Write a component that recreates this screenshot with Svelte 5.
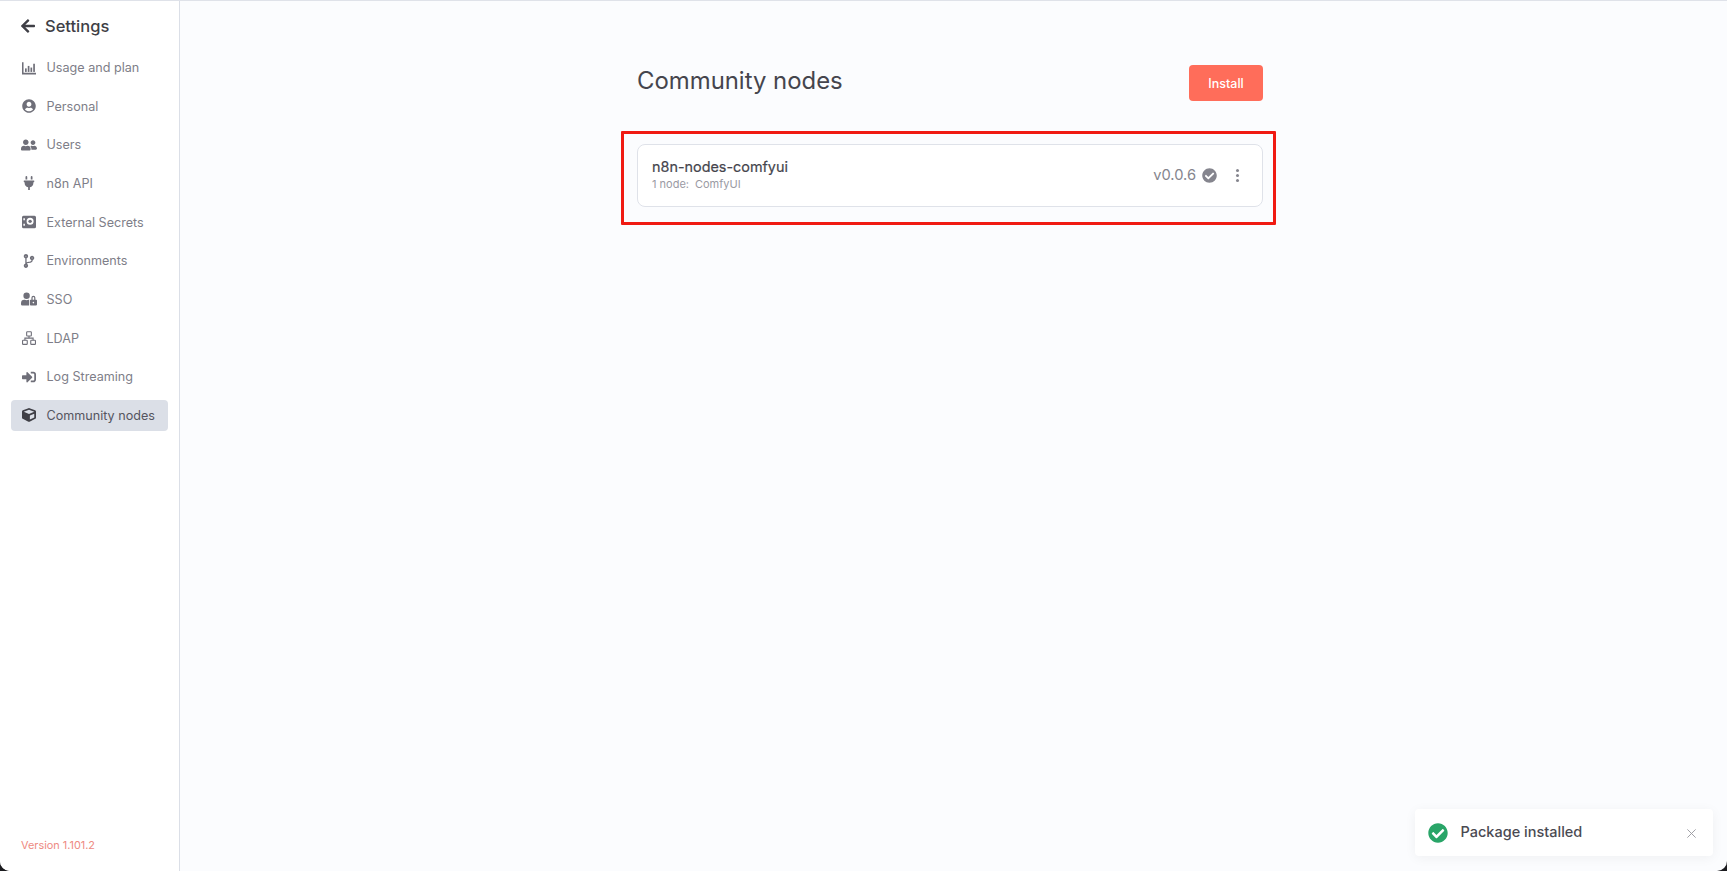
<script>
  const items = [
    { label: 'Usage and plan', vb: '0 0 512 512', custom: 'chart' },
    { label: 'Personal', vb: '0 0 496 512', d: 'M248 8C111 8 0 119 0 256s111 248 248 248 248-111 248-248S385 8 248 8zm0 96c48.6 0 88 39.4 88 88s-39.4 88-88 88-88-39.4-88-88 39.4-88 88-88zm0 344c-58.7 0-111.3-26.6-146.5-68.2 18.8-35.4 55.6-59.8 98.5-59.8 2.4 0 4.8.4 7.1 1.1 13 4.2 26.6 6.9 40.9 6.9 14.3 0 28-2.7 40.9-6.9 2.3-.7 4.7-1.1 7.1-1.1 42.9 0 79.7 24.4 98.5 59.8C359.3 421.4 306.7 448 248 448z' },
    { label: 'Users', vb: '0 0 640 512', d: 'M192 256c61.9 0 112-50.1 112-112S253.9 32 192 32 80 82.1 80 144s50.1 112 112 112zm76.8 32h-8.3c-20.8 10-43.9 16-68.5 16s-47.6-6-68.5-16h-8.3C51.6 288 0 339.6 0 403.2V432c0 26.5 21.5 48 48 48h288c26.5 0 48-21.5 48-48v-28.8c0-63.6-51.6-115.2-115.2-115.2zM480 256c53 0 96-43 96-96s-43-96-96-96-96 43-96 96 43 96 96 96zm48 32h-3.8c-13.9 4.8-28.6 8-44.2 8s-30.3-3.2-44.2-8H432c-20.4 0-39.2 5.9-55.7 15.4 24.4 26.3 39.7 61.2 39.7 99.8v38.4c0 2.2-.5 4.3-.6 6.4H592c26.5 0 48-21.5 48-48 0-61.9-50.1-112-112-112z' },
    { label: 'n8n API', vb: '0 0 384 512', d: 'M320,32a32,32,0,0,0-64,0v96h64Zm48,128H16A16,16,0,0,0,0,176v32a16,16,0,0,0,16,16H32v32A160.07,160.07,0,0,0,160,412.8V512h64V412.8A160.07,160.07,0,0,0,352,256V224h16a16,16,0,0,0,16-16V176A16,16,0,0,0,368,160ZM128,32a32,32,0,0,0-64,0v96h64Z' },
    { label: 'External Secrets', vb: '0 0 512 512', custom: 'vault' },
    { label: 'Environments', vb: '0 0 384 512', d: 'M384 144c0-44.2-35.8-80-80-80s-80 35.8-80 80c0 36.4 24.3 67.1 57.5 76.8-.6 16.1-4.2 28.5-11 36.9-15.4 19.2-49.3 22.4-85.2 25.7-28.2 2.6-57.4 5.4-81.3 16.9v-144c32.5-10.2 56-40.5 56-76.3 0-44.2-35.8-80-80-80S0 35.8 0 80c0 35.8 23.5 66.1 56 76.3v199.3C23.5 365.9 0 396.2 0 432c0 44.2 35.8 80 80 80s80-35.8 80-80c0-34-21.2-63.1-51.2-74.6 3.1-5.2 7.8-9.8 14.9-13.4 16.2-8.2 40.4-10.4 66.1-12.8 42.2-3.9 90-8.4 118.2-43.4 14-17.4 21.1-39.8 21.6-67.9 31.6-10.8 54.4-40.7 54.4-75.9zM80 64c8.8 0 16 7.2 16 16s-7.2 16-16 16-16-7.2-16-16 7.2-16 16-16zm0 384c-8.8 0-16-7.2-16-16s7.2-16 16-16 16 7.2 16 16-7.2 16-16 16zm224-320c8.8 0 16 7.2 16 16s-7.2 16-16 16-16-7.2-16-16 7.2-16 16-16z' },
    { label: 'SSO', vb: '0 0 640 512', d: 'M224 256A128 128 0 1 0 96 128a128 128 0 0 0 128 128zm96 64a63.08 63.08 0 0 1 8.1-30.5c-4.8-.5-9.5-1.5-14.5-1.5h-16.7a174.08 174.08 0 0 1-145.8 0h-16.7A134.43 134.43 0 0 0 0 422.4V464a48 48 0 0 0 48 48h280.9a63.54 63.54 0 0 1-8.9-32zm288-32h-32v-80a80 80 0 0 0-160 0v80h-32a32 32 0 0 0-32 32v160a32 32 0 0 0 32 32h224a32 32 0 0 0 32-32V320a32 32 0 0 0-32-32zM496 432a32 32 0 1 1 32-32 32 32 0 0 1-32 32zm32-144h-64v-80a32 32 0 0 1 64 0z' },
    { label: 'LDAP', vb: '0 0 512 512', custom: 'network' },
    { label: 'Log Streaming', vb: '0 0 512 512', d: 'M416 448h-84c-6.6 0-12-5.4-12-12v-40c0-6.6 5.4-12 12-12h84c17.7 0 32-14.3 32-32V160c0-17.7-14.3-32-32-32h-84c-6.6 0-12-5.4-12-12V76c0-6.6 5.4-12 12-12h84c53 0 96 43 96 96v192c0 53-43 96-96 96zm-47-201L201 79c-15-15-41-4.5-41 17v96H24c-13.3 0-24 10.7-24 24v96c0 13.3 10.7 24 24 24h136v96c0 21.5 26 32 41 17l168-168c9.3-9.4 9.3-24.6 0-34z' },
    { label: 'Community nodes', vb: '0 0 512 512', active: true, d: 'M239.1 6.3l-208 78c-18.7 7-31.1 25-31.1 45v225.1c0 18.2 10.3 34.8 26.5 42.9l208 104c13.5 6.8 29.4 6.8 42.9 0l208-104c16.3-8.1 26.5-24.8 26.5-42.9V129.3c0-20-12.4-37.9-31.1-44.9l-208-78C262 2.2 250 2.2 239.1 6.3zM256 68.4l192 72v1.1l-192 78-192-78v-1.1l192-72zm32 356V275.5l160-65v133.9l-160 80z' }
  ];
  const check = 'M504 256c0 136.967-111.033 248-248 248S8 392.967 8 256 119.033 8 256 8s248 111.033 248 248zM227.314 387.314l184-184c6.248-6.248 6.248-16.379 0-22.627l-22.627-22.627c-6.248-6.249-16.379-6.249-22.628 0L216 308.118l-70.059-70.059c-6.248-6.248-16.379-6.248-22.628 0l-22.627 22.627c-6.248 6.248-6.248 16.379 0 22.627l104 104c6.249 6.249 16.379 6.249 22.628.001z';
</script>

<div class="window">
  <aside class="sidebar">
    <div class="title">
      <svg class="back" viewBox="0 0 448 512" aria-hidden="true"><path d="M257.5 445.1l-22.2 22.2c-9.4 9.4-24.6 9.4-33.9 0L7 273c-9.4-9.4-9.4-24.6 0-33.9L201.4 44.7c9.4-9.4 24.6-9.4 33.9 0l22.2 22.2c9.5 9.5 9.3 25-.4 34.3L136.6 216H424c13.3 0 24 10.7 24 24v32c0 13.3-10.7 24-24 24H136.6l120.5 114.8c9.8 9.3 10 24.8.4 34.3z"/></svg>
      <span>Settings</span>
    </div>
    <nav class="nav">
      {#each items as item}
        <div class="item" class:active={item.active}>
          <span class="icon">
            <svg viewBox={item.vb} aria-hidden="true">
              {#if item.custom === 'chart'}
                <path d="M0 50h56v384h456v56H0z"/>
                <rect x="110" y="270" width="62" height="130"/>
                <rect x="210" y="180" width="62" height="220"/>
                <rect x="310" y="240" width="62" height="160"/>
                <rect x="410" y="100" width="62" height="300"/>
              {:else if item.custom === 'vault'}
                <path fill-rule="evenodd" d="M56 24h400a56 56 0 0 1 56 56v352a56 56 0 0 1-56 56H56a56 56 0 0 1-56-56V80a56 56 0 0 1 56-56zm240 80a128 128 0 1 0 0 256 128 128 0 0 0 0-256zM50 120v70h56v-70zm0 200v70h56v-70z"/>
                <circle cx="296" cy="232" r="62"/>
              {:else if item.custom === 'network'}
                <g class="outline">
                  <rect x="170" y="30" width="172" height="150" rx="24"/>
                  <rect x="20" y="340" width="172" height="150" rx="24"/>
                  <rect x="320" y="340" width="172" height="150" rx="24"/>
                  <path d="M256 180v80M106 340v-80h300v80"/>
                </g>
              {:else}
                <path d={item.d}/>
              {/if}
            </svg>
          </span>
          <span>{item.label}</span>
        </div>
      {/each}
    </nav>
    <div class="version">Version 1.101.2</div>
  </aside>

  <main class="main">
    <div class="content">
      <header class="head">
        <h1>Community nodes</h1>
        <button class="install">Install</button>
      </header>
      <section class="card">
        <div class="highlight"></div>
        <div class="info">
          <div class="pkg">n8n-nodes-comfyui</div>
          <div class="meta"><span>1 node:</span><span>ComfyUI</span></div>
        </div>
        <div class="right">
          <span class="ver">v0.0.6</span>
          <svg class="ok" viewBox="0 0 512 512" aria-hidden="true"><path d={check}/></svg>
          <span class="dots"><i></i><i></i><i></i></span>
        </div>
      </section>
    </div>
  </main>

  <div class="toast">
    <svg class="toast-ok" viewBox="0 0 512 512" aria-hidden="true"><path d={check}/></svg>
    <span class="toast-text">Package installed</span>
    <svg class="close" viewBox="0 0 12 12" aria-hidden="true"><path d="M1.5 1.5l9 9M10.5 1.5l-9 9"/></svg>
  </div>
</div>

<style>
  :global(body) {
    margin: 0;
    background: #1b1b1f;
    overflow: hidden;
  }
  .window {
    position: relative;
    box-sizing: border-box;
    height: 871px;
    display: flex;
    overflow: hidden;
    border-top: 1px solid #dfe2e9;
    border-radius: 0 0 10px 10px;
    background: #fbfcfe;
    font-family: Inter, "Liberation Sans", sans-serif;
  }
  .sidebar {
    box-sizing: border-box;
    flex: 0 0 180px;
    display: flex;
    flex-direction: column;
    background: #fff;
    border-right: 1px solid #dbdfe7;
    padding: 0 11px 19px;
  }
  .title {
    display: flex;
    align-items: center;
    gap: 10px;
    height: 50px;
    padding-left: 10px;
    font-size: 16.5px;
    font-weight: 500;
    color: #3f3f46;
  }
  .back {
    width: 14px;
    height: 16px;
    fill: #3f3f46;
  }
  .nav {
    display: flex;
    flex-direction: column;
    gap: 7px;
    padding-top: 0.7px;
  }
  .item {
    display: flex;
    align-items: center;
    height: 31.67px;
    border-radius: 4px;
    font-size: 12.6px;
    color: #7e7e88;
    padding-left: 10px;
    gap: 9.5px;
  }
  .item.active {
    background: #dbdfe7;
    color: #555560;
  }
  .icon {
    flex: 0 0 16px;
    height: 14px;
    display: flex;
    justify-content: center;
    align-items: center;
  }
  .icon svg {
    height: 14px;
    width: 16px;
    fill: #6f6f79;
  }
  .item.active .icon svg {
    fill: #3f3f46;
  }
  .outline {
    fill: none;
    stroke: #6f6f79;
    stroke-width: 40;
  }
  .version {
    margin-top: auto;
    padding-left: 10px;
    font-size: 10.9px;
    color: #ee8a82;
  }
  .main {
    flex: 1;
    display: flex;
    justify-content: flex-start;
    padding: 63px 0 0 457px;
  }
  .content {
    width: 626px;
  }
  .head {
    display: flex;
    justify-content: space-between;
    align-items: flex-start;
    height: 80px;
  }
  h1 {
    margin: 1px 0 0;
    font-size: 23.9px;
    font-weight: 400;
    line-height: 32px;
    color: #45454d;
  }
  .install {
    width: 74px;
    height: 36px;
    margin-top: 1px;
    border: none;
    border-radius: 4px;
    background: #ff6d5a;
    color: #fff;
    font: 500 12.5px Inter, "Liberation Sans", sans-serif;
  }
  .card {
    position: relative;
    box-sizing: border-box;
    height: 63px;
    display: flex;
    justify-content: space-between;
    align-items: center;
    background: #fff;
    border: 1px solid #dfe2e9;
    border-radius: 8px;
    padding: 0 23px 1px 14px;
  }
  .highlight {
    position: absolute;
    inset: -14px -14px -19px -17px;
    border: 3.5px solid #f01a12;
    border-radius: 1px;
    pointer-events: none;
  }
  .info {
    margin-bottom: 2px;
  }
  .pkg {
    font-size: 14.4px;
    font-weight: 400;
    -webkit-text-stroke: 0.2px #45454d;
    line-height: 20px;
    color: #45454d;
  }
  .meta {
    display: flex;
    gap: 6px;
    font-size: 11px;
    line-height: 14px;
    color: #9a9aa3;
  }
  .right {
    display: flex;
    align-items: center;
  }
  .ver {
    font-size: 14.7px;
    color: #85858e;
  }
  .ok {
    width: 15px;
    height: 15px;
    margin-left: 6px;
    fill: #85858e;
  }
  .dots {
    display: flex;
    flex-direction: column;
    gap: 2px;
    margin-left: 19px;
  }
  .dots i {
    width: 3px;
    height: 3px;
    border-radius: 50%;
    background: #85858e;
  }
  .toast {
    position: absolute;
    left: 1415px;
    top: 808px;
    box-sizing: border-box;
    width: 298px;
    height: 47px;
    display: flex;
    align-items: center;
    background: #fff;
    border-radius: 4px;
    box-shadow: 0 2px 12px rgba(0, 0, 0, 0.05);
    padding: 0 16px 0 13px;
  }
  .toast-ok {
    width: 20px;
    height: 20px;
    fill: #29a568;
  }
  .toast-text {
    flex: 1;
    margin-left: 12.5px;
    margin-top: -2px;
    font-size: 14.5px;
    font-weight: 500;
    color: #4a4a52;
  }
  .close {
    width: 11px;
    height: 11px;
    margin-top: 2px;
    fill: none;
    stroke: #98989f;
    stroke-width: 1;
  }
</style>
